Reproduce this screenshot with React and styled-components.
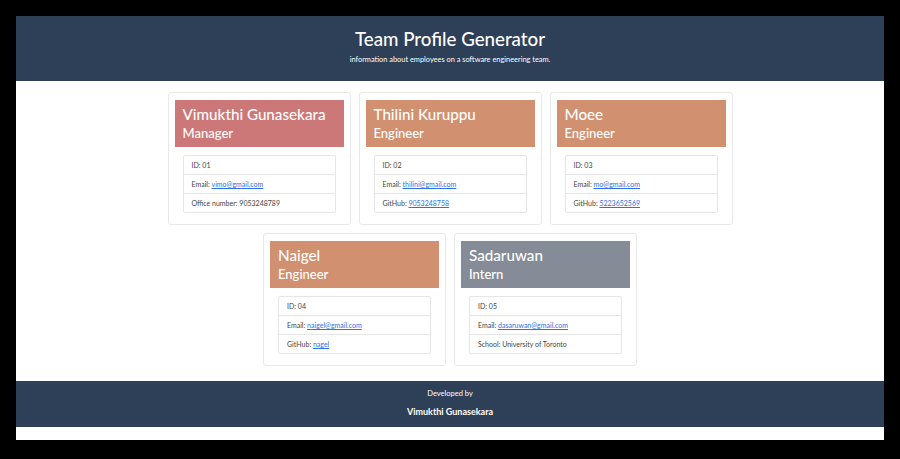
import styled, { createGlobalStyle } from 'styled-components'

const GlobalStyle = createGlobalStyle`
    html, body {
        margin: 0;
        padding: 0;
        background: #000;
    }
    body {
        font-family: Lato, "Open Sans", sans-serif;
    }
`

const Page = styled.div`
    margin: 16px;
    height: 424px;
    background: #fff;
    overflow: hidden;
    display: flex;
    flex-direction: column;
`

const Banner = styled.header`
    height: 65px;
    background: #2e3f58;
    color: #fff;
    display: flex;
    flex-direction: column;
    align-items: center;
    padding-top: 12px;
    box-sizing: border-box;
`

const Title = styled.h1`
    margin: 0;
    font-size: 18.7px;
    font-weight: 500;
    line-height: 23px;
`

const Subtitle = styled.p`
    margin: 4px 0 0;
    font-size: 7.4px;
    line-height: 10px;
`

const Team = styled.main`
    display: flex;
    flex-wrap: wrap;
    justify-content: center;
    gap: 8px;
    width: 566px;
    margin: 0 auto;
    padding: 11px 0 15px;
`

const Card = styled.div`
    width: 183px;
    height: 133px;
    box-sizing: border-box;
    border: 1px solid #e8e8e8;
    border-radius: 3px;
    padding: 7px 6px;
`

const CardHead = styled.div`
    height: 47px;
    box-sizing: border-box;
    background: ${p => p.$color};
    color: #fff;
    padding: 4px 8px 0;
`

const Name = styled.h2`
    margin: 0;
    font-size: 15.2px;
    font-weight: 500;
    line-height: 20px;
    white-space: nowrap;
`

const Role = styled.h3`
    margin: 0;
    font-size: 13px;
    font-weight: 500;
    line-height: 19px;
`

const Details = styled.ul`
    list-style: none;
    margin: 8px 8px 0;
    padding: 0;
    border: 1px solid #e6e6e6;
    border-radius: 2px;
`

const Detail = styled.li`
    height: 18px;
    display: flex;
    align-items: center;
    padding: 0 8px;
    font-size: 7px;
    color: #444;
    & + & {
        border-top: 1px solid #e6e6e6;
    }
    a {
        color: #2f6fe8;
    }
`

const Footer = styled.footer`
    height: 46px;
    background: #2e3f58;
    color: #fff;
    display: flex;
    flex-direction: column;
    align-items: center;
    padding-top: 8px;
    box-sizing: border-box;
`

const Credit = styled.p`
    margin: 0;
    font-size: 7.5px;
    line-height: 10px;
`

const Author = styled.p`
    margin: 7px 0 0;
    font-size: 9px;
    font-weight: 700;
    line-height: 12px;
`

const colors = {
    Manager: '#cd7878',
    Engineer: '#d1906f',
    Intern: '#858c98',
}

const team = [
    { name: 'Vimukthi Gunasekara', role: 'Manager', id: '01', email: 'vimo@gmail.com', extra: ['Office number', '9053248789'] },
    { name: 'Thilini Kuruppu', role: 'Engineer', id: '02', email: 'thilini@gmail.com', extra: ['GitHub', '9053248758', true] },
    { name: 'Moee', role: 'Engineer', id: '03', email: 'mo@gmail.com', extra: ['GitHub', '5223652569', true] },
    { name: 'Naigel', role: 'Engineer', id: '04', email: 'naigel@gmail.com', extra: ['GitHub', 'nagel', true] },
    { name: 'Sadaruwan', role: 'Intern', id: '05', email: 'dasaruwan@gmail.com', extra: ['School', 'University of Toronto'] },
]

const App = () => {
    return (
        <>
            <GlobalStyle />
            <Page>
                <Banner>
                    <Title>Team Profile Generator</Title>
                    <Subtitle>information about employees on a software engineering team.</Subtitle>
                </Banner>
                <Team>
                    {team.map((m, index) => (
                        <Card key={index}>
                            <CardHead $color={colors[m.role]}>
                                <Name>{m.name}</Name>
                                <Role>{m.role}</Role>
                            </CardHead>
                            <Details>
                                <Detail>ID: {m.id}</Detail>
                                <Detail>Email:&nbsp;<a href={'mailto:' + m.email}>{m.email}</a></Detail>
                                <Detail>
                                    {m.extra[0]}:&nbsp;
                                    {m.extra[2] ? <a href="#">{m.extra[1]}</a> : m.extra[1]}
                                </Detail>
                            </Details>
                        </Card>
                    ))}
                </Team>
                <Footer>
                    <Credit>Developed by</Credit>
                    <Author>Vimukthi Gunasekara</Author>
                </Footer>
            </Page>
        </>
    )
}

export default App
